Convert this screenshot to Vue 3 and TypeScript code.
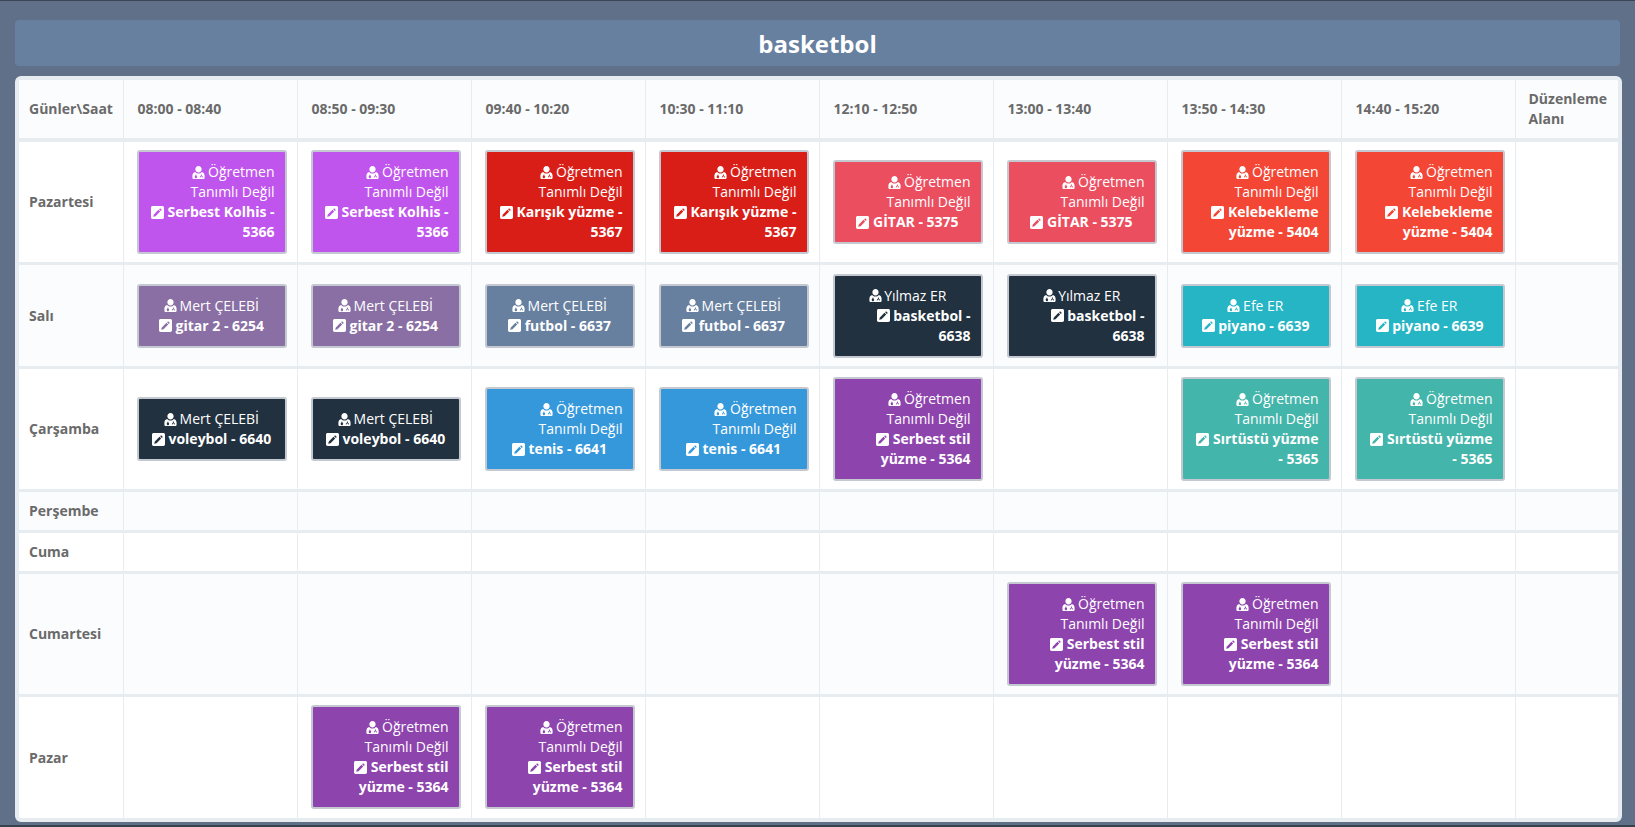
<script setup lang="ts">
interface Lesson { t: string; n: string; c: string; }
const times = ['08:00 - 08:40','08:50 - 09:30','09:40 - 10:20','10:30 - 11:10','12:10 - 12:50','13:00 - 13:40','13:50 - 14:30','14:40 - 15:20'];
const none = 'Öğretmen Tanımlı Değil';
const L = (t: string, n: string, c: string): Lesson => ({ t, n, c });
const kolhis = L(none, 'Serbest Kolhis - 5366', '#bf55ec');
const karisik = L(none, 'Karışık yüzme - 5367', '#d91e18');
const gitar = L(none, 'GİTAR - 5375', '#eb4e5f');
const kelebek = L(none, 'Kelebekleme yüzme - 5404', '#f44634');
const gitar2 = L('Mert ÇELEBİ', 'gitar 2 - 6254', '#8a6fa5');
const futbol = L('Mert ÇELEBİ', 'futbol - 6637', '#67809f');
const basket = L('Yılmaz ER', 'basketbol - 6638', '#22313f');
const piyano = L('Efe ER', 'piyano - 6639', '#26b5c4');
const voleybol = L('Mert ÇELEBİ', 'voleybol - 6640', '#22313f');
const tenis = L(none, 'tenis - 6641', '#3498db');
const serbest = L(none, 'Serbest stil yüzme - 5364', '#8e44ad');
const sirt = L(none, 'Sırtüstü yüzme - 5365', '#44b5aa');
const _ = null;
const rows: { day: string; cells: (Lesson | null)[] }[] = [
  { day: 'Pazartesi', cells: [kolhis, kolhis, karisik, karisik, gitar, gitar, kelebek, kelebek] },
  { day: 'Salı', cells: [gitar2, gitar2, futbol, futbol, basket, basket, piyano, piyano] },
  { day: 'Çarşamba', cells: [voleybol, voleybol, tenis, tenis, serbest, _, sirt, sirt] },
  { day: 'Perşembe', cells: [_, _, _, _, _, _, _, _] },
  { day: 'Cuma', cells: [_, _, _, _, _, _, _, _] },
  { day: 'Cumartesi', cells: [_, _, _, _, _, serbest, serbest, _] },
  { day: 'Pazar', cells: [_, serbest, serbest, _, _, _, _, _] },
];
</script>

<template>
  <div class="page">
    <h1 class="title">basketbol</h1>
    <div class="panel">
      <table class="grid">
        <thead>
          <tr>
            <th class="first">Günler\Saat</th>
            <th v-for="t in times" :key="t" class="time">{{ t }}</th>
            <th class="edit">Düzenleme Alanı</th>
          </tr>
        </thead>
        <tbody>
          <tr v-for="r in rows" :key="r.day">
            <th class="first">{{ r.day }}</th>
            <td v-for="(c, i) in r.cells" :key="i" class="slot">
              <div v-if="c" class="lesson" :style="{ backgroundColor: c.c }">
                <span class="line"><svg class="ic" viewBox="1 0.6 12 12.8"><path fill="currentColor" fill-rule="evenodd" d="M7 0.6C5.2 0.6 3.9 2 3.9 3.7S5.2 7 7 7 10.1 5.4 10.1 3.7 8.8 0.6 7 0.6ZM3.8 6.5C2 6.9 1 8.3 1 10.3V12.2C1 13 1.6 13.4 2.4 13.4H11.6C12.4 13.4 13 13 13 12.2V10.3C13 8.3 12 6.9 10.2 6.5 9.4 7.5 8.3 8.1 7 8.1S4.6 7.5 3.8 6.5ZM3.9 9.2V10.3A1.2 1.2 0 1 0 5 10.3V9.2ZM9.4 9V10.1C8.6 10.3 8.3 11 8.3 11.9H9.1C9.1 11.3 9.3 10.9 9.9 10.9S10.7 11.3 10.7 11.9H11.5C11.5 11 11 10.3 10.3 10.1V9Z"/></svg> {{ c.t }}</span>
                <strong class="line"><svg class="ic" viewBox="1 1 12 12"><path fill="currentColor" fill-rule="evenodd" d="M2.6 1H11.4C12.4 1 13 1.6 13 2.6V11.4C13 12.4 12.4 13 11.4 13H2.6C1.6 13 1 12.4 1 11.4V2.6C1 1.6 1.6 1 2.6 1ZM9.4 3 8.5 3.9 10.1 5.5 11 4.6ZM7.9 4.5 3.6 8.8 3 11 5.2 10.4 9.5 6.1Z"/></svg> {{ c.n }}</strong>
              </div>
            </td>
            <td class="slot"></td>
          </tr>
        </tbody>
      </table>
    </div>
  </div>
</template>

<style>
html, body { margin: 0; padding: 0; background: #5f7088; }
</style>

<style scoped>
.page {
  box-sizing: border-box;
  height: 827px;
  padding: 19px 13px 3px 15px;
  background: #5f7088;
  border-top: 1px solid #3a4654;
  border-bottom: 2px solid #37424f;
  font-family: "Open Sans", sans-serif;
  overflow: hidden;
}
.title {
  margin: 0 2px 10px 0;
  height: 46px;
  line-height: 48px;
  text-align: center;
  color: #fff;
  font-size: 24px;
  font-weight: 700;
  background: #67809f;
  border-radius: 4px;
}
.panel {
  box-sizing: border-box;
  height: 746px;
  background: #fff;
  border: 4px solid #e7ecf1;
  border-radius: 6px;
  overflow: hidden;
}
.grid {
  width: 100%;
  border-collapse: collapse;
  table-layout: fixed;
  color: #666;
  font-size: 14px;
  line-height: 20px;
}
.first { width: 104px; padding-left: 10px; text-align: left; font-weight: 700; color: #6a6a6a; box-sizing: border-box; }
.time { width: 174px; box-sizing: border-box; }
.edit { box-sizing: border-box; }
thead tr { background: #fbfcfe; }
thead th { text-align: left; padding: 9px 13px; font-weight: 700; color: #6a6a6a; border-right: 1px solid #e7ecf1; border-bottom: 4px solid #e7ecf1; }
thead th.time { padding-left: 14px; padding-right: 0; }
thead th.first { padding-left: 10px; padding-right: 0; }
thead th.edit { padding-right: 0; }
tbody tr:nth-child(even) { background: #fbfcfe; }
tbody th, tbody td { border-right: 1px solid #e7ecf1; border-bottom: 3px solid #e7ecf1; }
tbody td:last-child, thead th:last-child { border-right: 0; }
tbody tr:last-child th, tbody tr:last-child td { border-bottom: 0; }
.slot { padding: 8px 10px 8px 13px; vertical-align: middle; }
tbody tr:nth-child(2) .slot { padding-top: 8.5px; padding-bottom: 8.5px; }
tbody th.first { padding-top: 9px; padding-bottom: 9px; }
tbody tr:last-child .slot { padding-top: 8px; padding-bottom: 11px; vertical-align: top; }
tbody tr:last-child th.first { padding-bottom: 11px; }
.lesson {
  box-sizing: border-box;
  display: flex;
  flex-direction: column;
  align-items: center;
  padding: 10px;
  border: 2px solid #c4c8d0;
  border-radius: 3px;
  text-align: right;
  color: #fff;
  font-size: 14px;
  line-height: 20px;
}
.line { display: block; }
strong.line { font-weight: 700; }
.ic { display: inline-block; width: 13px; height: 13px; margin-right: -1px; vertical-align: -1.5px; }
strong .ic { margin-right: 0; }
</style>
